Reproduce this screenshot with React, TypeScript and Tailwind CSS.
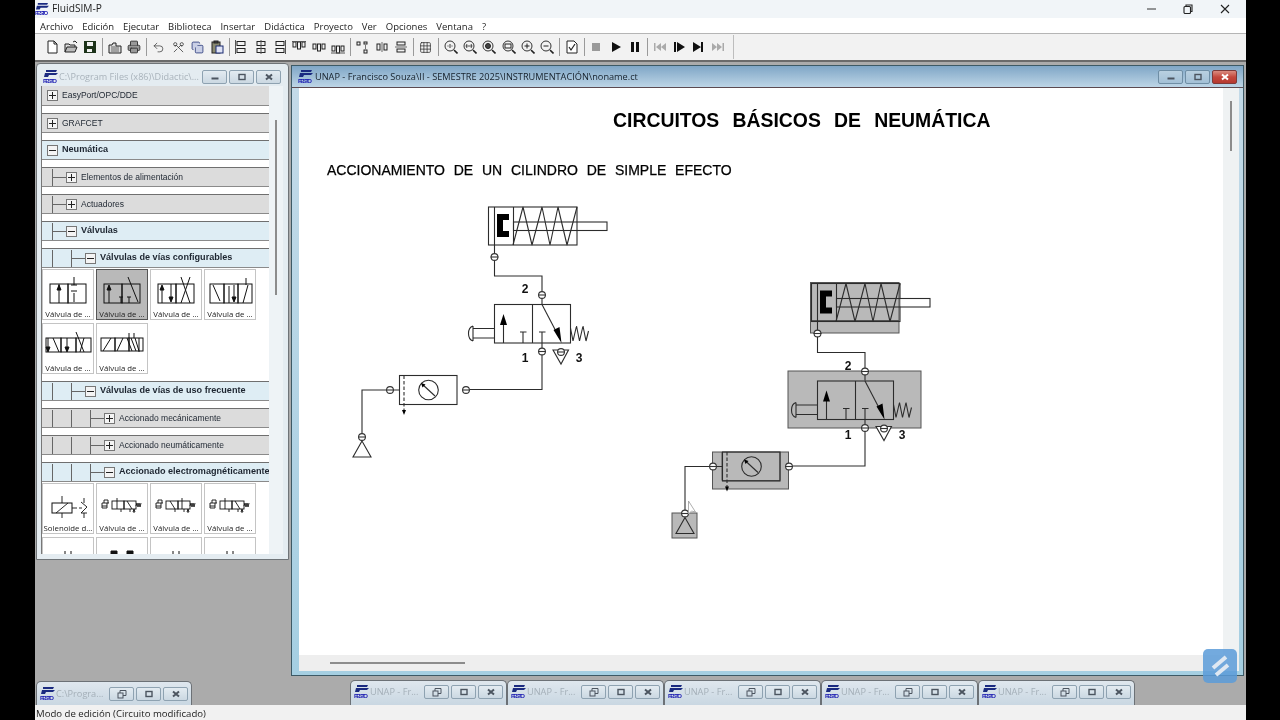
import React from 'react'
import { Scissors, Printer, Undo2, Copy, Grid3x3 } from 'lucide-react'

function Logo({ className = 'w-[15px] h-[14px]' }: { className?: string }) {
  return (
    <svg viewBox="0 0 15 14" className={`shrink-0 ${className}`}>
      <polygon points="3,0 14,0 13,2 3,2" fill="#1a2a80" />
      <polygon points="2,3 15,3 13,5 6,5 5,7 1,7" fill="#1a2a80" />
      <text x="0" y="13" fontSize="6" fontWeight="700" fontFamily="Liberation Sans, sans-serif" fill="#1616b0" textLength="14">FESTO</text>
    </svg>
  )
}

// toolbar glyphs, all 14x14
function Ic({ children }: { children: React.ReactNode }) {
  return (
    <svg viewBox="0 0 14 14" className="w-[14px] h-[14px]" fill="none" stroke="#222" strokeWidth="1">
      {children}
    </svg>
  )
}

const align = (v: number) => (
  <Ic>
    <rect x="3" y="1.5" width="8" height="4" />
    <rect x="3" y="8.5" width="8" height="4" />
    <path d={v === 0 ? 'M1.5 0v14' : v === 1 ? 'M7 0v14' : 'M12.5 0v14'} stroke="#555" />
  </Ic>
)
const distH = (v: number) => (
  <Ic>
    <rect x="1" y={v === 0 ? 2 : v === 1 ? 4 : 6} width="3" height="5" />
    <rect x="5.5" y={v === 0 ? 2 : v === 1 ? 4 : 6} width="3" height="7" />
    <rect x="10" y={v === 0 ? 2 : v === 1 ? 4 : 6} width="3" height="5" />
    <path d={v === 0 ? 'M0 1.5h14' : v === 1 ? '' : 'M0 13h14'} stroke="#555" />
  </Ic>
)
const mag = (inner: React.ReactNode) => (
  <Ic>
    <circle cx="6" cy="6" r="5" stroke="#333" />
    <path d="M10 10l3.5 3.5" strokeWidth="1.6" />
    {inner}
  </Ic>
)
const solid = (d: string, fill = '#111') => (
  <svg viewBox="0 0 14 14" className="w-[14px] h-[14px]">
    <path d={d} fill={fill} />
  </svg>
)

const groups: React.ReactNode[][] = [
  [
    <Ic><path d="M3 1h6l3 3v9H3z" fill="#fff" /><path d="M9 1v3h3" /></Ic>,
    <Ic><path d="M1 12V4h4l1 1h5v2" fill="#ddd" /><path d="M1 12l2-5h10l-2 5z" fill="#bbb" /><path d="M9 2l2-1 2 2" /></Ic>,
    solid('M1 1h12v12H1z M4 2v4h6V2z M4 9v3h5V9z', '#1d3319'),
  ],
  [
    <Ic><path d="M1 13V5h3l1-2 3 0v3h5v7z" fill="#ddd" /><path d="M3 7h8M3 9h8M3 11h8" stroke="#666" /></Ic>,
    <Printer size={14} strokeWidth={1.6} color="#333" fill="#999" />,
  ],
  [
    <Undo2 size={13} strokeWidth={1.3} color="#333" />,
    <Scissors size={13} strokeWidth={1.4} color="#333" className="rotate-90" />,
    <Copy size={13} strokeWidth={1.4} color="#1a2a70" fill="#c9cfe6" />,
    <Ic><rect x="2" y="2" width="8" height="11" fill="#8a8a70" /><rect x="6" y="6" width="7" height="7" fill="#dfe3f5" stroke="#1a2a70" /><rect x="4" y="1" width="4" height="2" fill="#444" /></Ic>,
  ],
  [align(0), align(1), align(2), distH(0), distH(1), distH(2)],
  [
    <Ic><rect x="1" y="2" width="3" height="3" /><rect x="8" y="2" width="3" height="2" /><rect x="8" y="10" width="3" height="3" /><path d="M9.5 5v4" stroke="#777" /></Ic>,
    <Ic><rect x="2" y="4" width="3" height="6" /><rect x="9" y="4" width="3" height="6" /><path d="M7 2v10" stroke="#666" /></Ic>,
    <Ic><rect x="3" y="2" width="8" height="3" /><rect x="3" y="9" width="8" height="3" /><path d="M1 7h12" stroke="#666" /></Ic>,
  ],
  [<Grid3x3 size={13} strokeWidth={1.3} color="#222" />],
  [
    mag(<path d="M3.5 6h1M7.5 6h1M6 4v4" strokeWidth="0.9" />),
    mag(<path d="M3 6h6M4 4l-1 2 1 2M8 4l1 2-1 2" strokeWidth="0.8" />),
    mag(<circle cx="6" cy="6" r="2.5" fill="#444" />),
    mag(<rect x="3" y="4" width="6" height="4" />),
    mag(<path d="M3.5 6h5M6 3.5v5" />),
    mag(<path d="M3.5 6h5" />),
  ],
  [<Ic><path d="M2 1h7l3 3v9H2z" fill="#fff" /><path d="M4 7l2 3 4-6" strokeWidth="1.2" /></Ic>],
  [
    solid('M3 3h8v8H3z', '#9a9a9a'),
    solid('M3 2l9 5-9 5z'),
    solid('M3 2h3v10H3zM8 2h3v10H8z'),
  ],
  [
    solid('M1 3h1.5v8H1zM8 3v8L3 7zM13 3v8L8 7z', '#aaa'),
    solid('M2 2h2v10H2zM5 2l8 5-8 5z'),
    solid('M2 2l8 5-8 5zM10 2h2v10h-2z'),
    solid('M1 3l5 4-5 4zM6 3l5 4-5 4zM11.5 3H13v8h-1.5z', '#aaa'),
  ],
]

function Toolbar() {
  return (
    <div className="flex h-[26px] items-center bg-[#f2f2f2] pl-[2px]">
      <div className="flex h-[24px] items-center border-r border-[#bdbdbd] pl-[5px] pr-[6px]">
        {groups.map((g, i) => (
          <React.Fragment key={i}>
            {i > 0 && (
              <div className="flex h-full w-[5.4px] items-center justify-center">
                <div className="h-[18px] w-px bg-[#9a9a9a]" />
              </div>
            )}
            {g.map((ic, j) => (
              <div key={j} className="flex h-full w-[19.3px] items-center justify-center">
                {ic}
              </div>
            ))}
          </React.Fragment>
        ))}
      </div>
    </div>
  )
}

const menus = ['Archivo', 'Edición', 'Ejecutar', 'Biblioteca', 'Insertar', 'Didáctica', 'Proyecto', 'Ver', 'Opciones', 'Ventana', '?']

function WinBtn({ kind, tone = 'pale' }: { kind: 'min' | 'max' | 'close' | 'restore'; tone?: 'pale' | 'blue' | 'red' }) {
  const bg =
    tone === 'red'
      ? 'border-[#7d3a3a] bg-gradient-to-b from-[#d98b80] via-[#c4483e] to-[#b5382f]'
      : tone === 'blue'
        ? 'border-[#6f8ea5] bg-gradient-to-b from-[#b9d0e0] to-[#a3c0d6]'
        : 'border-[#8ea2b1] bg-gradient-to-b from-[#e3ebf1] to-[#cbd8e2]'
  const ink = tone === 'red' ? '#fff' : '#4c5560'
  return (
    <div className={`flex h-[14px] w-[25px] items-center justify-center rounded-[2px] border ${bg}`}>
      <svg viewBox="0 0 10 10" className="h-[10px] w-[10px]" fill="none" stroke={ink}>
        {kind === 'min' && <path d="M1.5 6.5h7" strokeWidth="2" />}
        {kind === 'max' && <rect x="2" y="2.5" width="6" height="5" strokeWidth="1.4" />}
        {kind === 'close' && <path d="M2 2.5l6 5M8 2.5l-6 5" strokeWidth="2" />}
        {kind === 'restore' && (
          <>
            <rect x="1" y="4" width="5" height="5" strokeWidth="1" />
            <path d="M3 4V1.5h6v5H6" strokeWidth="1" />
          </>
        )}
      </svg>
    </div>
  )
}

function PlusBox({ open }: { open: boolean }) {
  return (
    <div className="flex h-[11px] w-[11px] shrink-0 items-center justify-center border border-[#777] bg-[#f4f4f4]">
      <svg viewBox="0 0 9 9" className="h-[9px] w-[9px]" stroke="#222" strokeWidth="1">
        <path d={open ? 'M1 4.5h7' : 'M1 4.5h7M4.5 1v7'} />
      </svg>
    </div>
  )
}

function Row({ label, level, open = false, clipTop = false }: { label: string; level: number; open?: boolean; clipTop?: boolean }) {
  const cells = []
  for (let i = 0; i < level; i++) {
    const last = i === level - 1
    cells.push(
      <div key={i} className={`flex h-[17px] shrink-0 items-center border-l border-[#666] ${last ? 'w-[14px]' : 'w-[19px]'}`}>
        {last && <div className="h-px w-full bg-[#666]" />}
      </div>,
    )
  }
  return (
    <div
      className={`flex h-5 shrink-0 items-center overflow-hidden whitespace-nowrap border-b border-[#8a8a8a] ${clipTop ? '' : 'border-t border-t-[#6f6f6f]'} ${
        open ? 'bg-[#deedf4]' : 'bg-[#dcdcdc]'
      } ${level > 0 ? 'pl-[10px]' : 'pl-[5px]'}`}
    >
      {cells}
      <PlusBox open={open} />
      <span className={`ml-[4px] text-[#1d2530] ${open ? 'text-[9.1px] font-bold' : 'text-[8.5px]'}`}>{label}</span>
    </div>
  )
}

function Tile({ label = 'Válvula de ...', selected = false, children }: { label?: string; selected?: boolean; children: React.ReactNode }) {
  return (
    <div
      className={`flex h-[51px] flex-col items-center border ${
        selected ? 'border-[#555] bg-[#b9b9b9]' : 'border-[#c4c4c4] bg-white'
      }`}
    >
      <svg viewBox="0 1 50 34" className="h-[34px] w-[50px]" fill="none" stroke="#111" strokeWidth="1">
        {children}
      </svg>
      {label && <span className="mt-[5px] text-[7.8px] leading-[10px] whitespace-nowrap text-[#222]">{label}</span>}
    </div>
  )
}

const upHead = (x: number, y: number) => <path d={`M${x} ${y}l-2 5h4z`} fill="#111" />
const downHead = (x: number, y: number) => <path d={`M${x} ${y}l-2-5h4z`} fill="#111" />

function Cells({ x = 7, w = 18, y = 15, h = 19, n = 2 }: { x?: number; w?: number; y?: number; h?: number; n?: number }) {
  return (
    <>
      {Array.from({ length: n }).map((_, i) => (
        <rect key={i} x={x + i * w} y={y} width={w} height={h} />
      ))}
    </>
  )
}

function ElectricValve({ flip = false }: { flip?: boolean }) {
  return (
    <g strokeWidth="0.9" transform="translate(0 4)">
      <path d="M5 16h7M7 16v-3h4v3M5 16v5h5v-5M5 19h5" />
      <rect x="15" y="14" width="12" height="8" />
      <rect x="27" y="14" width="12" height="8" />
      <path d={flip ? 'M31 22V11M19 14l5 8' : 'M20 22V11M30 14l5 8'} />
      <path d="M39 19l1-3 1 4 1-4 1 4 1-4" />
      <path d="M24 22v3M33 22v3M37 22l-1 3h2z" />
    </g>
  )
}

function LeftPanel() {
  return (
    <div className="flex h-full flex-col">
      <div className="flex h-[22px] shrink-0 items-center pt-[4px] pr-[7px] pl-[6px]">
        <Logo />
        <span className="ml-[1px] min-w-0 flex-1 overflow-hidden font-['Open_Sans',sans-serif] text-[9.1px] whitespace-nowrap text-[#a9b3bb]">
          C:\Program Files (x86)\Didactic\...
        </span>
        <div className="flex gap-[2px]">
          <WinBtn kind="min" />
          <WinBtn kind="max" />
          <WinBtn kind="close" />
        </div>
      </div>
      <div className="flex min-h-0 flex-1 pr-[5px] pb-[5px] pl-[4px]">
        <div className="flex w-[228px] flex-col gap-[7px] overflow-hidden border-l border-[#777] bg-white font-['Liberation_Sans',sans-serif]">
          <Row label="EasyPort/OPC/DDE" level={0} clipTop />
          <Row label="GRAFCET" level={0} />
          <Row label="Neumática" level={0} open />
          <Row label="Elementos de alimentación" level={1} />
          <Row label="Actuadores" level={1} />
          <Row label="Válvulas" level={1} open />
          <div className="flex flex-col">
            <Row label="Válvulas de vías configurables" level={2} open />
            <div className="mt-px grid w-[214px] grid-cols-4 gap-x-[2px] gap-y-[3px] font-['Open_Sans',sans-serif]">
              <Tile>
                <Cells />
                <path d="M16 34V15" />
                {upHead(16, 16)}
                <path d="M31 8v8M31 33v-9M28 22h6M28 16h6" />
              </Tile>
              <Tile selected>
                <Cells />
                <path d="M12 34V17" />
                {upHead(12, 16)}
                <path d="M22 28h4M24 28v6M30 28h4M32 28v6M31 8l10 25" />
              </Tile>
              <Tile>
                <Cells />
                <path d="M11 34V17M20 15v17" />
                {upHead(11, 16)}
                {downHead(20, 33)}
                <path d="M30 8l9 26M39 8l-9 26" />
              </Tile>
              <Tile>
                <Cells x={5} w={14} n={3} />
                <path d="M8 16l7 16M24 34V17M29 16v16M38 34l5-18" />
                {downHead(29, 33)}
                <path d="M41 9v7" />
              </Tile>
              <Tile>
                <Cells x={3} w={15} n={3} y={15} h={14} />
                <path d="M5 15v13M10 15l6 14M24 15v13M33 9l8 20M41 15l-4 14" />
                {downHead(5, 29)}
                {downHead(24, 29)}
              </Tile>
              <Tile>
                <Cells x={4} w={14} n={3} y={15} h={13} />
                <path d="M6 28l8-13M20 28l6-13M30 15l5 13M34 15l5 13M38 15l4 13M42 15v14M32 10v5M37 10v5" />
              </Tile>
            </div>
          </div>
          <Row label="Válvulas de vías de uso frecuente" level={2} open />
          <Row label="Accionado mecánicamente" level={3} />
          <Row label="Accionado neumáticamente" level={3} />
          <div className="flex flex-col">
            <Row label="Accionado electromagnéticamente" level={3} open />
            <div className="mt-px grid w-[214px] grid-cols-4 gap-x-[2px] gap-y-[3px] font-['Open_Sans',sans-serif]">
              <Tile label="Solenoide d...">
                <g transform="translate(0 5)">
                  <rect x="9" y="15" width="20" height="10" />
                  <path d="M19 8v7M19 25v5M13 25l12-10M29 20h5M36 20h3M41 10v5M41 25v5M38 14l6 5-6 6 6 0" strokeWidth="0.9" />
                </g>
              </Tile>
              <Tile><ElectricValve /></Tile>
              <Tile><ElectricValve flip /></Tile>
              <Tile><ElectricValve /></Tile>
              <Tile label=""><path d="M22 14v6M28 14v6" /></Tile>
              <Tile label=""><path d="M14 14h6v6h-6zM30 14h6v6h-6z" fill="#111" /></Tile>
              <Tile label=""><path d="M22 14v6M28 14v6" /></Tile>
              <Tile label=""><path d="M22 14v6M28 14v6" /></Tile>
            </div>
          </div>
        </div>
        <div className="flex flex-1 justify-center bg-[#eef3f6] pt-[34px]">
          <div className="h-[175px] w-[2px] bg-[#8c8c8c]" />
        </div>
      </div>
    </div>
  )
}

function Port({ x, y }: { x: number; y: number }) {
  return (
    <>
      <circle cx={x} cy={y} r="3.4" fill="#fff" stroke="#333" />
      <path d={`M${x - 4} ${y}h8`} stroke="#333" />
    </>
  )
}

function Circuit({ shaded = false }: { shaded?: boolean }) {
  const label = { fontFamily: 'Liberation Sans, sans-serif', fontSize: 12, fontWeight: 700, fill: '#111', stroke: 'none', textAnchor: 'middle' as const }
  return (
    <g fill="none" stroke="#2c2c2c" strokeWidth="1.1">
      {/* cylinder */}
      <rect x="488.5" y="207" width="88.5" height="38" />
      <path d="M494.5 207v38M513.5 207v38" />
      <path d="M509 214h-12v23h12v-6h-6v-11h6z" fill="#000" stroke="none" />
      <path d="M513 245l10-38 9 38 10-38 8 38 8-38 9 38 10-38" />
      {shaded && <rect x="577.5" y="222.5" width="29" height="7.5" fill="#fff" stroke="none" />}
      <rect x="513.5" y="222" width="93.5" height="8.5" />
      {/* wires */}
      <path d="M494.5 245V276H542V304M542 343V389.5H470M399 390H362V437" />
      {/* valve */}
      <rect x="494.5" y="304.5" width="76" height="38.5" />
      <path d="M532.5 304.5V343" />
      <path d="M503.5 343V318" />
      <path d="M503.5 314l-3.5 11h7z" fill="#000" stroke="none" />
      <path d="M520 332h6.5M523 332v11M539 332h6.5M542 332v11" />
      <path d="M542 304.5L560 339" />
      <path d="M561.5 343l-8-13 6-3z" fill="#000" stroke="none" />
      <path d="M473 328.5h21.5M473 338h21.5" />
      <path d="M473 326v15M473 326c-6 2-6 13 0 15" />
      <path d="M570.5 328l2.5 13 3.5-15 3 15 3.5-15 3 15 2.5-10" />
      <path d="M553 350h15.5l-7.5 14z" fill={shaded ? '#fff' : 'none'} />
      <Port x={494.5} y={257} />
      <Port x={542} y={295} />
      <Port x={542} y={351.5} />
      <Port x={561} y={352} />
      {/* service unit */}
      <rect x="399.5" y="375.5" width="57.5" height="29" />
      <path d="M404 375.5V411" strokeDasharray="3.5 2" />
      <path d="M404 415l-2-5h4z" fill="#000" stroke="none" />
      <circle cx="428.5" cy="390" r="9.8" />
      <path d="M422 384l13 12" />
      <path d="M421 383l4.5 1.5-3 3z" fill="#000" stroke="none" />
      <Port x={390} y={390} />
      <Port x={466} y={390} />
      {/* compressor */}
      <Port x={362} y={437} />
      <path d="M362 441l-9 16h18z" />
      <text x="525" y="293" {...label}>2</text>
      <text x="525" y="362" {...label}>1</text>
      <text x="579" y="362" {...label}>3</text>
    </g>
  )
}

function Drawing() {
  return (
    <svg viewBox="299 88 924 567" className="absolute inset-0 h-full w-full">
      <Circuit />
      <g fill="#b9b9b9" stroke="#555">
        <rect x="810.5" y="282.5" width="88.5" height="50.5" />
        <path d="M810.5 320.5H899" fill="none" />
        <rect x="788" y="371" width="133" height="57" />
        <rect x="712.5" y="452" width="76" height="37" />
        <path d="M722 452V480.5H780V452" fill="none" />
        <rect x="672" y="513" width="25" height="25" />
      </g>
      <g transform="translate(323 76.5)">
        <Circuit shaded />
      </g>
      <path d="M688.5 501v13l3-3 4 1z" fill="#fff" stroke="#999" strokeWidth="0.8" />
    </svg>
  )
}

function RightPanel() {
  return (
    <div className="flex h-full flex-col">
      <div className="flex h-[22px] shrink-0 items-center border-b border-[#5c4a50] bg-gradient-to-b from-[#7fa6c6] to-[#bdd5e6] pr-[6px] pl-[6px]">
        <Logo />
        <span className="ml-[2px] flex-1 font-['Open_Sans',sans-serif] text-[9.2px] text-[#15202b]">
          UNAP - Francisco Souza\II - SEMESTRE 2025\INSTRUMENTACIÓN\noname.ct
        </span>
        <div className="flex gap-[2px]">
          <WinBtn kind="min" tone="blue" />
          <WinBtn kind="max" tone="blue" />
          <WinBtn kind="close" tone="red" />
        </div>
      </div>
      <div className="flex min-h-0 flex-1 bg-gradient-to-b from-[#c3dae8] to-[#a5cfe2] pr-[4px] pb-[4px] pl-[7px]">
        <div className="flex min-w-0 flex-1 flex-col">
          <div className="flex min-h-0 flex-1">
            <div className="relative flex-1 overflow-hidden bg-white font-['Liberation_Sans',sans-serif] text-black">
              <h1 className="pt-[20px] pl-[314px] text-[19.4px] leading-[24px] font-bold [word-spacing:7.8px]">
                CIRCUITOS BÁSICOS DE NEUMÁTICA
              </h1>
              <h2 className="pt-[29px] pl-[28px] text-[14px] leading-[18px] font-normal [word-spacing:4.9px] [-webkit-text-stroke:0.25px_#000]">
                ACCIONAMIENTO DE UN CILINDRO DE SIMPLE EFECTO
              </h2>
              <Drawing />
            </div>
            <div className="flex w-[16px] shrink-0 justify-center bg-[#eff2f3] pt-[13px]">
              <div className="h-[50px] w-[2px] bg-[#8c8c8c]" />
            </div>
          </div>
          <div className="flex h-[16px] shrink-0 items-center bg-[#eeeeee] pl-[31px]">
            <div className="h-[2px] w-[135px] bg-[#8c8c8c]" />
          </div>
        </div>
      </div>
    </div>
  )
}

function MiniTab({ label, wide = false }: { label: string; wide?: boolean }) {
  return (
    <div
      className={`flex items-center rounded-t-[5px] border border-b-0 border-[#6c7176] bg-gradient-to-b from-[#dfe7ee] to-[#c9d7e2] pr-[3px] pl-[3px] ${
        wide ? 'h-[24px] w-[156px]' : 'h-[25px] w-[157px] pb-[3px]'
      }`}
    >
      <Logo />
      <span className="ml-[1px] min-w-0 flex-1 overflow-hidden font-['Open_Sans',sans-serif] text-[9.2px] whitespace-nowrap text-[#a4afb8]">{label}</span>
      <div className="flex gap-[2px]">
        <WinBtn kind="restore" />
        <WinBtn kind="max" />
        <WinBtn kind="close" />
      </div>
    </div>
  )
}

export default function App() {
  return (
    <div className="relative flex h-[720px] w-[1280px] overflow-hidden bg-black blur-[0.35px]">
      <div className="w-[35px] shrink-0 bg-black" />
      <div className="flex w-[1211px] shrink-0 flex-col font-['Open_Sans',sans-serif]">
        {/* title bar */}
        <div className="flex h-[18px] shrink-0 items-center bg-[#f1f5f8] pr-[16px]">
          <Logo className="h-[13px] w-[14px]" />
          <span className="ml-[3px] flex-1 text-[10.2px] text-[#222]">FluidSIM-P</span>
          <svg viewBox="0 0 10 10" className="mr-[26px] h-[10px] w-[10px]" stroke="#333" fill="none">
            <path d="M0 5h9" />
          </svg>
          <svg viewBox="0 0 10 10" className="mr-[27px] h-[10px] w-[10px]" stroke="#222" fill="none" strokeWidth="1.1">
            <rect x="1" y="2.5" width="6.5" height="7" rx="1" />
            <path d="M3 2.5V1h6v6.5H7.5" />
          </svg>
          <svg viewBox="0 0 10 10" className="h-[10px] w-[10px]" stroke="#222" fill="none" strokeWidth="1.1">
            <path d="M1 1l8 8M9 1l-8 8" />
          </svg>
        </div>
        {/* menu */}
        <div className="flex h-[16px] shrink-0 items-center gap-[9px] border-b border-[#b5b5b5] bg-white pt-[3px] pl-[5px] text-[9.5px] text-[#222]">
          {menus.map(m => (
            <span key={m}>{m}</span>
          ))}
        </div>
        <Toolbar />
        {/* mdi area */}
        <div className="relative flex-1 border-t-2 border-[#6a6a6a] bg-[#ababab]">
          <div className="absolute top-[1px] left-[1px] h-[497px] w-[253px] rounded-t-[4px] border border-[#6f7478] bg-[#e4ecf1]">
            <LeftPanel />
          </div>
          <div className="absolute top-[3px] left-[256px] h-[611px] w-[953px] border border-[#3d5a66]">
            <RightPanel />
          </div>
          <div className="absolute bottom-0 left-[1px]">
            <MiniTab label="C:\Progra..." wide />
          </div>
          <div className="absolute bottom-0 left-[315px] flex">
            {[0, 1, 2, 3, 4].map(i => (
              <MiniTab key={i} label="UNAP - Fr..." />
            ))}
          </div>
        </div>
        {/* status */}
        <div className="flex h-[15px] shrink-0 items-center bg-[#f1f1f1] pt-[3px] pl-[1px] text-[9.6px] text-[#222]">
          Modo de edición (Circuito modificado)
        </div>
      </div>
      <div className="flex-1 bg-black" />
      {/* recorder watermark */}
      <div className="absolute top-[649px] left-[1203px] flex h-[34px] w-[34px] items-center justify-center rounded-[5px] bg-[#5b9bd8]/85">
        <svg viewBox="0 0 24 24" className="h-[24px] w-[24px]" fill="none" stroke="#dfe8f2" strokeWidth="4">
          <path d="M18 3L5 14M20 11L8 21" />
        </svg>
      </div>
    </div>
  )
}
